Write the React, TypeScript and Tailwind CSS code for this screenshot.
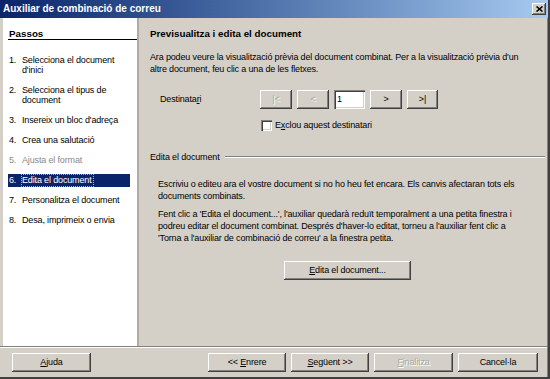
import React from "react";

const FONT = "font-['Liberation_Sans',Arial,sans-serif]";

function Btn({
  children,
  className = "",
  disabled = false,
}: {
  children: React.ReactNode;
  className?: string;
  disabled?: boolean;
}) {
  return (
    <div
      className={
        "flex items-center justify-center h-[19px] bg-[#d4d0c8] text-[9px] leading-[11px] shadow-[inset_-1px_-1px_0_#404040,inset_1px_1px_0_#ffffff,inset_-2px_-2px_0_#808080] " +
        (disabled ? "text-[#a8a8a8] [text-shadow:1px_1px_0_#ffffff] " : "text-black ") +
        className
      }
    >
      <span className="whitespace-pre">{children}</span>
    </div>
  );
}

function U({ children }: { children: React.ReactNode }) {
  return <span className="underline underline-offset-1">{children}</span>;
}

const steps: { n: string; lines: string[]; state?: "disabled" | "active" }[] = [
  { n: "1.", lines: ["Selecciona el document", "d'inici"] },
  { n: "2.", lines: ["Selecciona el tipus de", "document"] },
  { n: "3.", lines: ["Insereix un bloc d'adreça"] },
  { n: "4.", lines: ["Crea una salutació"] },
  { n: "5.", lines: ["Ajusta el format"], state: "disabled" },
  { n: "6.", lines: ["Edita el document"], state: "active" },
  { n: "7.", lines: ["Personalitza el document"] },
  { n: "8.", lines: ["Desa, imprimeix o envia"] },
];

export default function App() {
  return (
    <div
      className={
        FONT +
        " w-[550px] h-[379px] bg-[#d4d0c8] flex flex-col text-black text-[9px] leading-[11px] tracking-[-0.15px] overflow-hidden border-r-2 border-b-2 border-r-[#404040] border-b-[#404040]"
      }
    >
      {/* Title bar */}
      <div className="h-[18px] flex items-center justify-between pl-[3px] pr-[2px] bg-gradient-to-r from-[#0a246a] to-[#a6caf0]">
        <span className="text-white font-bold text-[10px] leading-[12px] tracking-normal">
          Auxiliar de combinació de correu
        </span>
        <div className="w-[14px] h-[12px] flex items-center justify-center bg-[#d4d0c8] shadow-[inset_-1px_-1px_0_#404040,inset_1px_1px_0_#ffffff,inset_-2px_-2px_0_#808080]">
          <svg width="7" height="6" viewBox="0 0 7 6">
            <path d="M0.5 0.5 L6.5 5.5 M6.5 0.5 L0.5 5.5" stroke="#000" strokeWidth="1.6" />
          </svg>
        </div>
      </div>

      {/* Body */}
      <div className="flex h-[328px] pl-[3px] border-r border-r-[#808080]">
        {/* Steps panel */}
        <div className="w-[136px] bg-white border-r-2 border-r-[#b0aca4] pl-[5px] pt-[10px]">
          <div className="border-b border-black h-[12px] pl-[1px] font-bold text-[9.8px] leading-[11px] tracking-normal">
            Passos
          </div>
          <div className="mt-[15px] flex flex-col gap-[9px]">
            {steps.map((s) => (
              <div
                key={s.n}
                className={
                  "flex w-[122px] pl-[1px] " +
                  (s.state === "active"
                    ? "bg-[#0a246a] text-white py-[1px] -my-[1px]"
                    : s.state === "disabled"
                    ? "text-[#8a8a8a]"
                    : "")
                }
              >
                <span className="w-[13px] shrink-0">{s.n}</span>
                <div className="flex flex-col">
                  {s.lines.map((l, i) => (
                    <span
                      key={l}
                      className={
                        (i > 0 ? "-mt-[1px] " : "") +
                        (s.state === "active"
                          ? "outline-1 outline-dotted outline-[#b0b0b0] outline-offset-0 pr-[1px]"
                          : "")
                      }
                    >
                      {l}
                    </span>
                  ))}
                </div>
              </div>
            ))}
          </div>
        </div>

        {/* Main panel */}
        <div className="flex-1 pl-[11px] pr-[2px] pt-[10px] flex flex-col">
          <div className="font-bold text-[9.8px] leading-[12px] tracking-normal">
            Previsualitza i edita el document
          </div>
          <div className="mt-[11px] leading-[12px]">
            Ara podeu veure la visualització prèvia del document combinat. Per a la visualització prèvia d'un
            <br />
            altre document, feu clic a una de les fletxes.
          </div>

          <div className="mt-[15px] flex items-center h-[19px]">
            <span className="ml-[10px] w-[100px]">
              Destinata<U>r</U>i
            </span>
            <div className="flex gap-[4px] items-center">
              <Btn disabled className="w-[32px]">|&lt;</Btn>
              <Btn disabled className="w-[32px] ml-[1px]">&lt;</Btn>
              <div className="w-[31px] h-[19px] ml-[1px] bg-white pl-[3px] flex items-center shadow-[inset_1px_1px_0_#808080,inset_2px_2px_0_#404040,inset_-1px_-1px_0_#ffffff,inset_-2px_-2px_0_#d4d0c8]">
                1
              </div>
              <Btn className="w-[32px] ml-[1px]">&gt;</Btn>
              <Btn className="w-[31px] ml-[1px]">&gt;|</Btn>
            </div>
          </div>

          <div className="mt-[10px] flex items-center h-[12px] ml-[111px]">
            <div className="w-[11px] h-[11px] bg-white shadow-[inset_1px_1px_0_#808080,inset_2px_2px_0_#404040,inset_-1px_-1px_0_#ffffff,inset_-2px_-2px_0_#d4d0c8]" />
            <span className="ml-[3px]">
              E<U>x</U>clou aquest destinatari
            </span>
          </div>

          <div className="mt-[20px] flex items-center h-[12px]">
            <span>Edita el document</span>
            <div className="ml-[5px] flex-1 h-[2px] border-t border-t-[#808080] border-b border-b-white" />
          </div>

          <div className="mt-[15px] ml-[8px] leading-[12px]">
            Escriviu o editeu ara el vostre document si no ho heu fet encara. Els canvis afectaran tots els
            <br />
            documents combinats.
          </div>
          <div className="mt-[6px] ml-[8px] leading-[12px]">
            Fent clic a 'Edita el document...', l'auxiliar quedarà reduït temporalment a una petita finestra i
            <br />
            podreu editar el document combinat. Després d'haver-lo editat, torneu a l'auxiliar fent clic a
            <br />
            'Torna a l'auxiliar de combinació de correu' a la finestra petita.
          </div>

          <div className="mt-[17px] ml-[134px]">
            <Btn className="w-[127px]">
              <U>E</U>dita el document...
            </Btn>
          </div>
        </div>
      </div>

      {/* Bottom bar */}
      <div className="flex-1 border-t border-t-[#808080] border-r border-r-[#808080]">
        <div className="h-full border-t border-t-white flex items-start pt-[5px] pl-[12px]">
          <Btn className="w-[79px]">
            <U>A</U>juda
          </Btn>
          <div className="ml-auto flex gap-[5px] pr-[9px]">
            <Btn className="w-[78px]">
              {"<< "}
              <U>E</U>nrere
            </Btn>
            <Btn className="w-[78px]">
              <U>S</U>egüent {">>"}
            </Btn>
            <Btn disabled className="w-[79px]">
              <U>F</U>inalitza
            </Btn>
            <Btn className="w-[80px]">Cancel·la</Btn>
          </div>
        </div>
      </div>
    </div>
  );
}
